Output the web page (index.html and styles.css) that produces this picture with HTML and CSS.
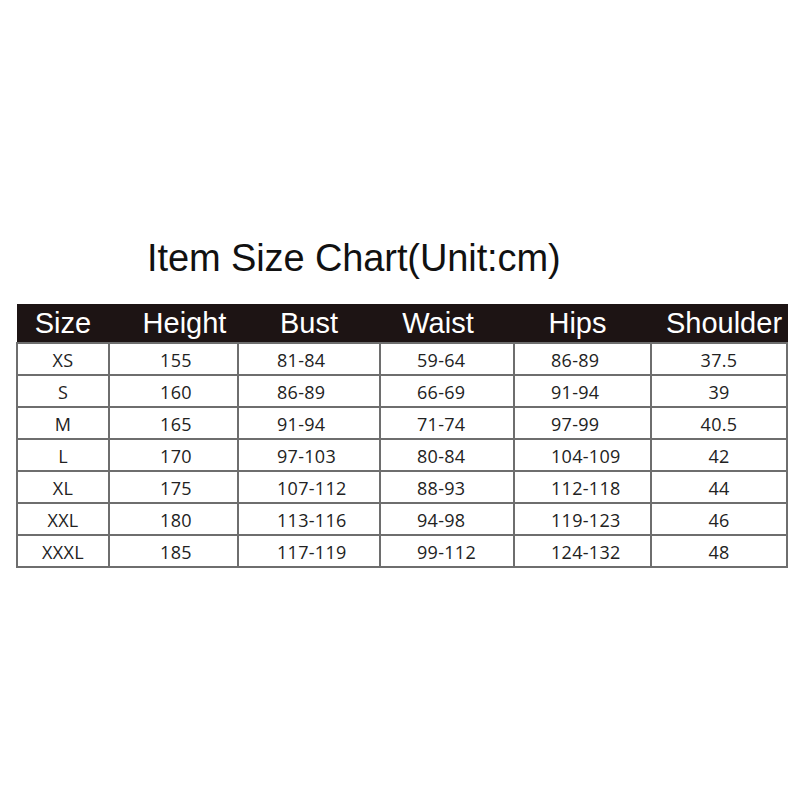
FILE: index.html
```html
<!DOCTYPE html>
<html>
<head>
<meta charset="utf-8">
<link rel="stylesheet" href="styles.css">
</head>
<body>
<div class="page">
  <h1 class="title">Item Size Chart(Unit:cm)</h1>
  <table class="chart">
    <colgroup>
      <col class="c1"><col class="c2"><col class="c3"><col class="c4"><col class="c5"><col class="c6">
    </colgroup>
    <thead>
      <tr>
        <th>Size</th><th class="h-height">Height</th><th>Bust</th><th class="h-waist">Waist</th><th class="h-hips">Hips</th><th class="h-shoulder">Shoulder</th>
      </tr>
    </thead>
    <tbody>
      <tr><td class="ctr">XS</td><td class="ctr ht">155</td><td class="bust">81-84</td><td class="lft">59-64</td><td class="lft">86-89</td><td class="ctr">37.5</td></tr>
      <tr><td class="ctr">S</td><td class="ctr ht">160</td><td class="bust">86-89</td><td class="lft">66-69</td><td class="lft">91-94</td><td class="ctr">39</td></tr>
      <tr><td class="ctr">M</td><td class="ctr ht">165</td><td class="bust">91-94</td><td class="lft">71-74</td><td class="lft">97-99</td><td class="ctr">40.5</td></tr>
      <tr><td class="ctr">L</td><td class="ctr ht">170</td><td class="bust">97-103</td><td class="lft">80-84</td><td class="lft">104-109</td><td class="ctr">42</td></tr>
      <tr><td class="ctr">XL</td><td class="ctr ht">175</td><td class="bust">107-112</td><td class="lft">88-93</td><td class="lft">112-118</td><td class="ctr">44</td></tr>
      <tr><td class="ctr">XXL</td><td class="ctr ht">180</td><td class="bust">113-116</td><td class="lft">94-98</td><td class="lft">119-123</td><td class="ctr">46</td></tr>
      <tr><td class="ctr">XXXL</td><td class="ctr ht">185</td><td class="bust">117-119</td><td class="lft">99-112</td><td class="lft">124-132</td><td class="ctr">48</td></tr>
    </tbody>
  </table>
</div>
</body>
</html>
```
FILE: styles.css
```css
html, body {
  margin: 0;
  padding: 0;
  background: #ffffff;
}
.page {
  width: 800px;
  height: 800px;
  padding: 239px 0 0 16px;
  box-sizing: border-box;
}
.title {
  margin: 0 0 27px 131px;
  font-family: "Liberation Sans", Arial, sans-serif;
  font-weight: normal;
  font-size: 38px;
  line-height: 38px;
  color: #111111;
  letter-spacing: -0.1px;
}
.chart {
  border-collapse: collapse;
  table-layout: fixed;
  width: 770px;
}
.c1 { width: 92px; }
.c2 { width: 129px; }
.c3 { width: 142px; }
.c4 { width: 134px; }
.c5 { width: 137px; }
.c6 { width: 136px; }
.chart th {
  height: 37px;
  padding: 0;
  font-family: "Liberation Sans", Arial, sans-serif;
  font-weight: normal;
  font-size: 29px;
  line-height: 37px;
  color: #ffffff;
  text-align: center;
  border: 1px solid #1d1414;
  background: #1d1414;
}
.chart th.h-height { padding-left: 22px; }
.chart th.h-waist { padding-right: 18px; }
.chart th.h-hips { padding-right: 10px; }
.chart th.h-shoulder { padding-left: 10px; }
.chart td {
  height: 29px;
  padding: 1px 0 0 0;
  border: 2px solid #6e6e6e;
  font-family: "Open Sans", "Noto Sans", sans-serif;
  font-size: 18px;
  line-height: 24px;
  color: #222222;
  letter-spacing: 0.3px;
  vertical-align: middle;
}
.chart td.ctr { text-align: center; }
.chart td.ht { padding-left: 5px; }
.chart td.bust { padding-left: 38px; }
.chart td.lft { padding-left: 36px; }
```
